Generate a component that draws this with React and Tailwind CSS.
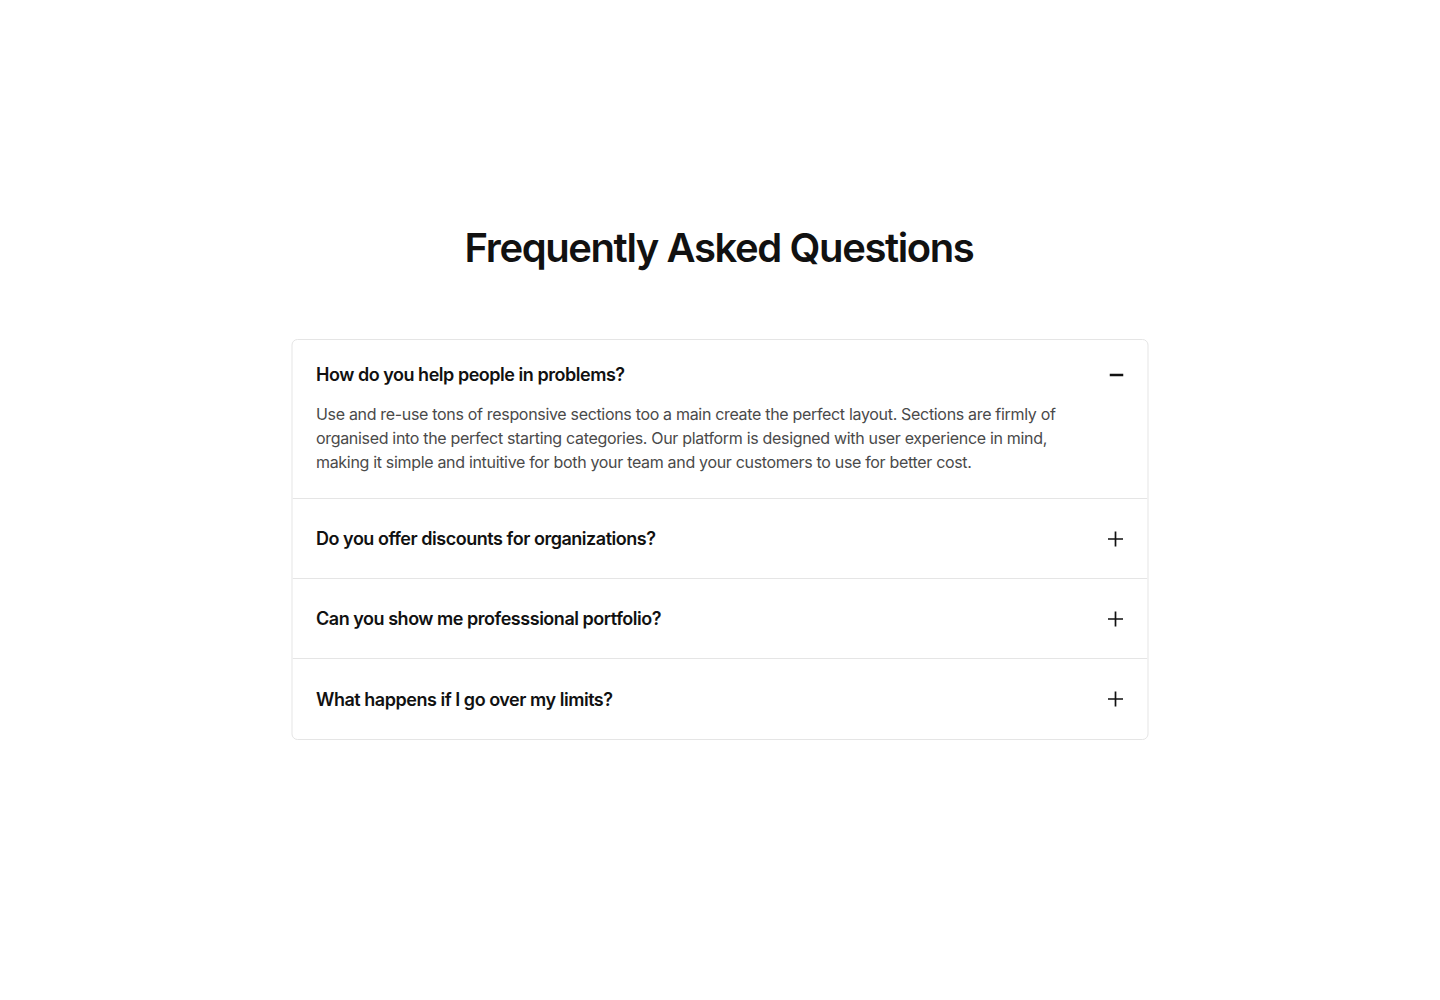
import React from "react";

const faqs = [
  { q: "How do you help people in problems?", open: true },
  { q: "Do you offer discounts for organizations?" },
  { q: "Can you show me professsional portfolio?" },
  { q: "What happens if I go over my limits?" },
];

function Plus() {
  return (
    <svg width="16" height="16" viewBox="0 0 16 16" fill="none" className="shrink-0">
      <path d="M8 0.5V15.5M0.5 8H15.5" stroke="#111111" strokeWidth="1.7" />
    </svg>
  );
}

function Minus() {
  return (
    <svg width="14" height="4" viewBox="0 0 14 4" fill="none" className="shrink-0 translate-y-[1px]">
      <path d="M0 2H14" stroke="#111111" strokeWidth="2.4" />
    </svg>
  );
}

export default function App() {
  return (
    <div
      className="min-h-[1000px] bg-white flex flex-col items-center pt-[222px]"
      style={{ fontFamily: "Inter, 'Noto Sans', sans-serif" }}
    >
      <h1 className="text-[40px] leading-[52px] font-semibold tracking-[-0.035em] text-[#111111] -translate-x-[1px]">
        Frequently Asked Questions
      </h1>
      <div className="mt-[65px] w-[857px] -translate-x-[0.5px] border border-[#e5e5e5] rounded-md overflow-hidden">
        {faqs.map((f, i) =>
          f.open ? (
            <div key={i} className="px-6 pt-5 pb-6 border-b border-[#e5e5e5]">
              <div className="flex items-center justify-between h-7">
                <span className="text-[18px] font-semibold tracking-[-0.026em] text-[#111111]">{f.q}</span>
                <span className="w-4 flex justify-end"><Minus /></span>
              </div>
              <p className="mt-[14px] text-[16px] leading-6 tracking-[-0.02em] text-[#4a4a4a] max-w-[760px]">
                Use and re-use tons of responsive sections too a main create the perfect layout. Sections are firmly of organised into the perfect starting categories. Our platform is designed with user experience in mind, making it simple and intuitive for both your team and your customers to use for better cost.
              </p>
            </div>
          ) : (
            <div
              key={i}
              className={`px-6 h-20 flex items-center justify-between ${i < faqs.length - 1 ? "border-b border-[#e5e5e5]" : ""}`}
            >
              <span className="text-[18px] font-semibold tracking-[-0.026em] text-[#111111]">{f.q}</span>
              <Plus />
            </div>
          )
        )}
      </div>
    </div>
  );
}
